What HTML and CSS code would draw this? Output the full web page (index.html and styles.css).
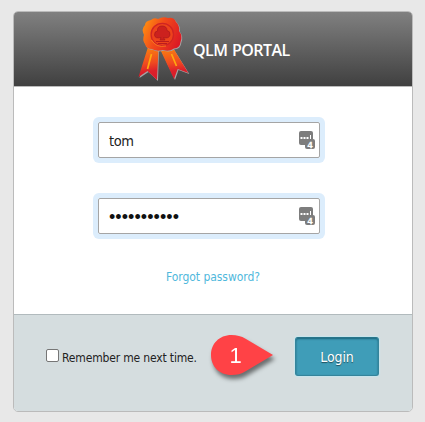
FILE: index.html
```
<!DOCTYPE html>
<html lang="en">
<head>
<meta charset="utf-8">
<title>QLM Portal</title>
<link rel="stylesheet" href="styles.css">
</head>
<body>
<main class="card">
  <header class="header">
    <svg class="ribbon" width="52" height="66" viewBox="0 0 52 66">
      <defs>
        <linearGradient id="seal" x1="0" y1="0.2" x2="1" y2="0.6"><stop offset="0" stop-color="#ff9010"/><stop offset=".45" stop-color="#f24a1a"/><stop offset="1" stop-color="#db1a24"/></linearGradient>
        <linearGradient id="tail" x1="0.4" y1="0" x2="0.5" y2="1"><stop offset="0" stop-color="#f98210"/><stop offset=".5" stop-color="#f04a20"/><stop offset=".75" stop-color="#dc202a"/><stop offset="1" stop-color="#d91b2a"/></linearGradient>
      </defs>
      <g fill="#a5a5a5"><path d="M11 32L1.500 62L10.500 56L20 65L21 34Z"/><path d="M23 34L37 64L40.500 54L51.300 58L35 32Z"/></g>
      <path fill="url(#tail)" d="M10 31L.5 61L9.500 55L19 64L20.500 33Z"/>
      <path fill="url(#tail)" d="M22 33L36 63L39.700 53L50.300 57L34.500 31Z"/>
      <path d="M13.500 38L9.500 53M33.500 38L38.500 50" stroke="#ffa810" stroke-width="1.700" fill="none"/>
      <path fill="#a5a5a5" transform="translate(.8 .8)" d="M13 4Q16 1 20 3Q25 0 30 2Q36 1 38 6Q42 10 41 15Q45 20 42.500 26Q42 32 36 32.500Q31 36 25 34Q18 36 14 33Q8 33 7 28Q4 24 6 19Q3 13 7 9Q7 5 13 4Z"/>
      <path fill="url(#seal)" d="M13 4Q16 1 20 3Q25 0 30 2Q36 1 38 6Q42 10 41 15Q45 20 42.500 26Q42 32 36 32.500Q31 36 25 34Q18 36 14 33Q8 33 7 28Q4 24 6 19Q3 13 7 9Q7 5 13 4Z"/>
      <circle cx="24.300" cy="18.500" r="11.200" fill="#ed431c" stroke="#d02422" stroke-width="1.300"/>
      <path d="M13.500 24Q18 32 28 30" fill="none" stroke="#ff8a20" stroke-width=".8"/>
      <path fill="#cc211e" stroke="#a9191b" stroke-width=".7" d="M23 21.500Q17 23 16.500 19Q16.500 15 19.500 15Q19 10 24 10Q29 10 29 14.500Q32.500 15 32 19Q31 23 25.500 21.500L27 24H22Z"/>
      <path d="M18 25.500H31M20 27.500H29" stroke="#bb1c1d"/>
    </svg>
    <h1 class="title">QLM PORTAL</h1>
  </header>
  <section class="fields">
    <div class="field"><span class="name">tom</span>
      <svg class="key" width="17" height="19" viewBox="0 0 17 19"><rect width="14" height="14" rx="2" fill="#7d7d7d"/><path d="M1.500 6h2v2h-2zM4.500 6h2v2h-2zM7.500 6h2v2h-2zM11 4h1v4h-1z" fill="#fff"/><rect x="6" y="8" width="10" height="10" rx="2" fill="#7d7d7d"/><text x="8.500" y="16.500" class="count">4</text></svg>
    </div>
    <div class="field"><span class="dots">•••••••••••</span>
      <svg class="key" width="17" height="19" viewBox="0 0 17 19"><rect width="14" height="14" rx="2" fill="#7d7d7d"/><path d="M1.500 6h2v2h-2zM4.500 6h2v2h-2zM7.500 6h2v2h-2zM11 4h1v4h-1z" fill="#fff"/><rect x="6" y="8" width="10" height="10" rx="2" fill="#7d7d7d"/><text x="8.500" y="16.500" class="count">4</text></svg>
    </div>
    <a class="forgot">Forgot password?</a>
  </section>
  <footer class="footer">
    <label class="remember"><span class="box"></span><span class="label">Remember me next time.</span></label>
    <svg class="callout" width="76" height="56" viewBox="0 0 76 56">
      <path fill="#ff4246" d="M21.500 5C9 5 1 14 1 25S9 45 21.500 45C27 45 31 44 36 41L63 25L36 9C31 6 27 5 21.500 5Z"/>
      <text x="25.500" y="33" class="step">1</text>
    </svg>
    <button class="login">Login</button>
  </footer>
</main>
</body>
</html>
```

FILE: styles.css
```
* { box-sizing: border-box; }
body { margin: 0; padding: 11px 12px 10px 13px; background: #e8e8e8; font-family: "DejaVu Sans Condensed", "DejaVu Sans", sans-serif; font-stretch: condensed; }
.card { width: 400px; height: 401px; border: 1px solid #bbb; border-radius: 5px; overflow: hidden; background: #fff; }
.header { height: 75px; display: flex; align-items: flex-start; padding: 4px 0 0 124px; background: linear-gradient(#808080, #404040); border-bottom: 1px solid #bbb; }
.ribbon { flex: none; }
.title { margin: 23px 0 0 3px; font: 600 16px/22px "Open Sans", sans-serif; color: #fff; white-space: nowrap; letter-spacing: -0.55px; word-spacing: 1px; }
.fields { height: 227px; padding-top: 35px; display: flex; flex-direction: column; align-items: center; }
.field { width: 222px; height: 36px; margin: 0 8px 40px 0; padding: 0 3px 0 10px; display: flex; align-items: center; justify-content: space-between; border: 1px solid #a5a5a5; border-radius: 2px; box-shadow: 0 0 0 5px #dcedfc; color: #222; }
.name { padding-top: 1px; font-size: 14.5px; line-height: 20px; letter-spacing: -0.4px; }
.dots { padding-top: 2px; font: 18px/20px "Liberation Sans", sans-serif; letter-spacing: 0.07px; color: #111; }
.key { flex: none; margin-top: 1px; }
.count { font: bold 9px "Liberation Sans", sans-serif; fill: #fff; stroke: #fff; stroke-width: .3px; }
.forgot { margin-top: -6px; font-size: 12px; line-height: 18px; letter-spacing: -0.05px; color: #4fb8dc; white-space: nowrap; }
.footer { height: 98px; display: flex; align-items: flex-start; background: #d5dddf; border-top: 1px solid #b1babd; }
.remember { width: 196px; flex: none; padding: 34px 0 0 32px; display: flex; }
.box { width: 13px; height: 13px; border: 1px solid #767676; border-radius: 2px; background: #fff; flex: none; }
.label { margin: 0 0 0 3px; font-size: 12px; line-height: 18px; letter-spacing: -0.16px; color: #222; white-space: nowrap; }
.callout { flex: none; margin-top: 15px; filter: drop-shadow(2px 4px 2px rgba(0,0,0,.5)); }
.step { font: 22px "Liberation Sans", sans-serif; fill: #fff; text-anchor: middle; }
.login { width: 84px; height: 39px; margin: 22px 0 0 9px; padding: 0; border: 1px solid #35849b; border-top-color: #28758a; border-radius: 3px; background: #3f9db8; color: #fff; font: 14px/20px "DejaVu Sans Condensed", sans-serif; font-stretch: condensed; letter-spacing: -0.1px; text-shadow: 0 1px 1px rgba(0,0,0,.5); box-shadow: inset 0 1px 2px rgba(0,60,80,.6), 0 0 1px 1px #c7e5ed; }
```
